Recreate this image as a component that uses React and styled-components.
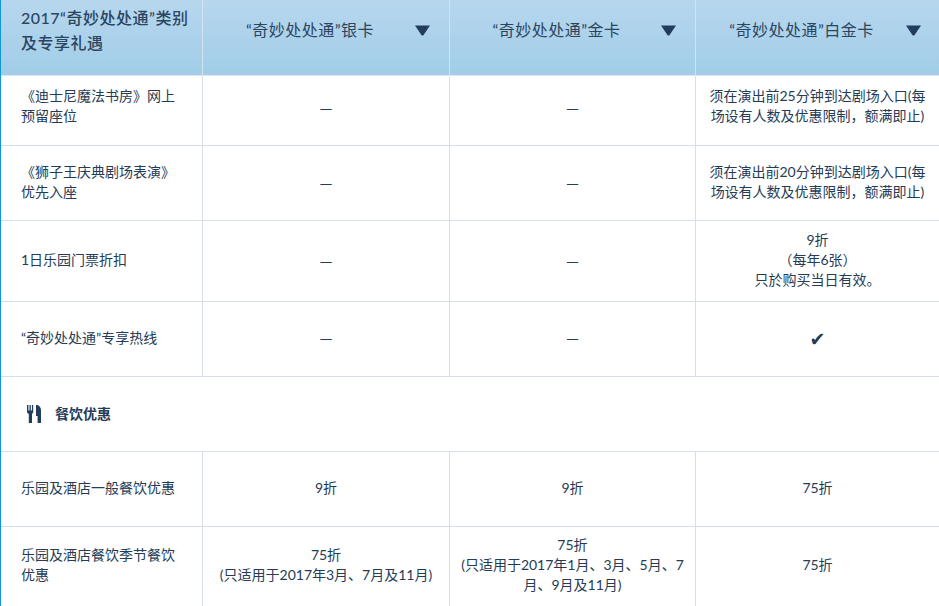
import React from "react";
import styled, { createGlobalStyle } from "styled-components";

const Global = createGlobalStyle`
  html, body { margin: 0; padding: 0; background: #fff; }
  body { width: 939px; height: 606px; overflow: hidden; }
`;

const Page = styled.div`
  width: 939px;
  height: 606px;
  overflow: hidden;
  box-sizing: border-box;
  border-left: 1px solid #0f96dc;
  font-family: Lato, "Noto Sans CJK SC", sans-serif;
  font-size: 14px;
  line-height: 20px;
  color: #253b56;
`;

const Row = styled.div`
  display: grid;
  grid-template-columns: 202px 247px 246px 243px;
  height: ${(p) => p.$h}px;
  box-sizing: border-box;
  border-bottom: 1px solid #d6dee8;
`;

const HeaderRow = styled(Row)`
  background: linear-gradient(#b7d7ee, #a1cde8);
  border-bottom: 1px solid #dfe6ee;
`;

const Cell = styled.div`
  box-sizing: border-box;
  display: flex;
  align-items: center;
  justify-content: center;
  text-align: center;
  padding: 0 10px ${(p) => p.$up || 0}px;
  border-right: 1px solid #d6dee8;
  &:last-child { border-right: 0; }
`;

const LabelCell = styled(Cell)`
  justify-content: flex-start;
  text-align: left;
  padding: 0 20px ${(p) => p.$up || 0}px 20px;
`;

const HeadTitle = styled(LabelCell)`
  font-size: 16px;
  line-height: 25px;
  letter-spacing: 0.5px;
  font-weight: 500;
  color: #2b4560;
  padding: 0 10px 16px 20px;
  border-right: 1px solid #d3e4f1;
`;

const Caret = styled.svg`
  position: absolute;
  right: 19px;
  top: 25px;
  width: 15px;
  height: 11px;
  fill: #223c5e;
`;

const HeadCell = styled(Cell)`
  position: relative;
  font-size: 16px;
  letter-spacing: 0.5px;
  color: #2b4560;
  padding: 0 32px 16px 0;
  border-right: 1px solid #d3e4f1;
  &:last-child ${Caret} { right: 18px; }
`;

const Section = styled.div`
  display: flex;
  align-items: center;
  gap: 14px;
  padding-left: 26px;
  font-weight: 700;
  font-size: 14px;
  white-space: nowrap;
`;

const Check = styled.span`
  font-family: "DejaVu Sans", sans-serif;
  font-size: 19px;
`;

const Dash = styled.span`
  font-family: "Noto Sans CJK SC", sans-serif;
`;

const Down = () => (
  <Caret viewBox="0 0 15 11">
    <path d="M0 0.5 H15 L8.6 10 Q7.5 11 6.4 10 Z" />
  </Caret>
);

const D = () => <Dash>—</Dash>;

export default function App() {
  return (
    <Page>
      <Global />
      <HeaderRow $h={76}>
        <HeadTitle>2017“奇妙处处通”类别及专享礼遇</HeadTitle>
        <HeadCell>“奇妙处处通”银卡<Down /></HeadCell>
        <HeadCell>“奇妙处处通”金卡<Down /></HeadCell>
        <HeadCell>“奇妙处处通”白金卡<Down /></HeadCell>
      </HeaderRow>
      <Row $h={70}>
        <LabelCell $up={10}>《迪士尼魔法书房》网上预留座位</LabelCell>
        <Cell $up={8}><D /></Cell>
        <Cell $up={8}><D /></Cell>
        <Cell $up={10}>须在演出前25分钟到达剧场入口(每场设有人数及优惠限制，额满即止)</Cell>
      </Row>
      <Row $h={75}>
        <LabelCell $up={2}>《狮子王庆典剧场表演》优先入座</LabelCell>
        <Cell $up={2}><D /></Cell>
        <Cell $up={2}><D /></Cell>
        <Cell $up={2}>须在演出前20分钟到达剧场入口(每场设有人数及优惠限制，额满即止)</Cell>
      </Row>
      <Row $h={81}>
        <LabelCell $up={2}>1日乐园门票折扣</LabelCell>
        <Cell $up={2}><D /></Cell>
        <Cell $up={2}><D /></Cell>
        <Cell $up={3}><div>9折<br />（每年6张）<br />只於购买当日有效。</div></Cell>
      </Row>
      <Row $h={75}>
        <LabelCell $up={3}>“奇妙处处通”专享热线</LabelCell>
        <Cell $up={4}><D /></Cell>
        <Cell $up={4}><D /></Cell>
        <Cell $up={1}><Check>✔</Check></Cell>
      </Row>
      <Row $h={75}>
        <Section>
          <svg width="14" height="18" viewBox="0 0 14 18" fill="#223c5e">
            <path d="M0 0h1.4v5.5h1.1V0h1.3v5.5h1.1V0H6.2v7.6L5 9v8.4q0 .6-.6.6H2.4q-.6 0-.6-.6V9L0 7.6z" />
            <path d="M9 0c3 0 5 2 5 5.5v12q0 .5-.6.5h-2.2q-.6 0-.6-.5V11H9z" />
          </svg>
          <span>餐饮优惠</span>
        </Section>
      </Row>
      <Row $h={75}>
        <LabelCell $up={3}>乐园及酒店一般餐饮优惠</LabelCell>
        <Cell $up={3}>9折</Cell>
        <Cell $up={3}>9折</Cell>
        <Cell $up={3}>75折</Cell>
      </Row>
      <Row $h={80}>
        <LabelCell $up={3}>乐园及酒店餐饮季节餐饮优惠</LabelCell>
        <Cell $up={3}><div>75折<br />(只适用于2017年3月、7月及11月)</div></Cell>
        <Cell $up={3}><div>75折<br />(只适用于2017年1月、3月、5月、7<br />月、9月及11月)</div></Cell>
        <Cell $up={3}>75折</Cell>
      </Row>
    </Page>
  );
}
